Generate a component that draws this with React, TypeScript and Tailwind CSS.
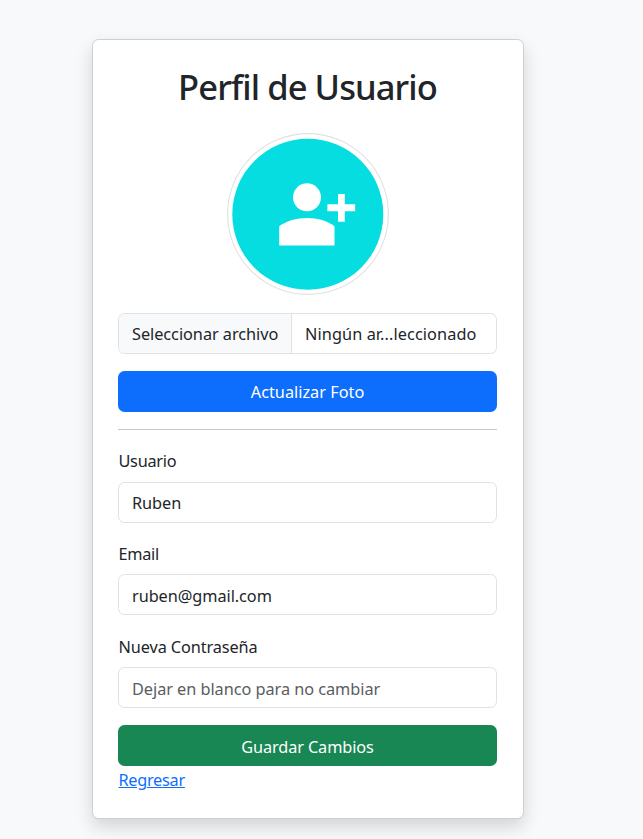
import type { ReactNode } from "react";

function Field({ label, value, placeholder, labelClass, inputClass, id }: {
  label: string;
  value?: string;
  placeholder?: string;
  labelClass: string;
  inputClass: string;
  id: string;
}) {
  return (
    <div className="flex flex-col">
      <label htmlFor={id} className={`mb-[7px] h-[27px] pl-[0.5px] leading-[27px] ${labelClass}`}>{label}</label>
      <input
        id={id}
        defaultValue={value}
        placeholder={placeholder}
        className={`h-[41px] w-full rounded-[6.5px] border border-[#dee2e6] bg-white px-[13px] outline-none placeholder:text-[#595c5f] placeholder:opacity-100 ${inputClass}`}
      />
    </div>
  );
}

function Button({ color, children }: { color: string; children: ReactNode }) {
  return (
    <button className={`flex h-[41px] w-full items-center justify-center rounded-[6.5px] pt-[2px] text-white ${color}`}>
      {children}
    </button>
  );
}

function Avatar() {
  return (
    <svg className="mx-auto block h-[162px] w-[162px]" viewBox="227 133 162 162" aria-label="Foto de perfil">
      <circle cx="308" cy="214" r="80.4" fill="#fff" stroke="#dee2e6" strokeWidth="1.1" />
      <circle cx="307.8" cy="214.3" r="75.5" fill="#06dde0" />
      <g fill="#fff">
        <circle cx="307" cy="197.3" r="14" />
        <path d="M279.2 245.4V226.2C287 220.8 296 218 307 218S327 220.8 334.5 226.2V245.4Z" />
        <path d="M338 194H344.8V204.3H355.2V211.2H344.8V221.8H338V211.2H327.4V204.3H338Z" />
      </g>
    </svg>
  );
}

export default function App() {
  return (
    <main className="h-[839px] w-full overflow-hidden bg-[#f8f9fa] pt-[39px] pl-[92px] font-['Noto_Sans','Open_Sans',sans-serif] text-[16.3px] text-[#212529]">
      <section className="flex h-[780px] w-[432px] flex-col rounded-[6.5px] border border-[#cdd0d2] bg-white pt-[26px] pr-[26px] pl-[25px] shadow-[0_8px_17px_rgba(0,0,0,0.15)]">
        <h1 className="h-[44px] text-center text-[34.5px] leading-[41px] font-medium tracking-[-0.9px] whitespace-nowrap">Perfil de Usuario</h1>
        <div className="mt-[23px] flex justify-center pl-px"><Avatar /></div>
        <div className="mt-[18px] flex h-[41px] shrink-0 overflow-hidden rounded-[6.5px] border border-[#dee2e6]">
          <span className="flex w-[173px] shrink-0 items-center border-r border-[#dee2e6] bg-[#f8f9fa] pt-[2px] pl-[13px] tracking-[-0.04px] whitespace-nowrap"><span>Seleccionar archivo</span></span>
          <span className="flex items-center pt-[2px] pl-[13px] tracking-[0.09px] whitespace-nowrap"><span>Ningún ar...leccionado</span></span>
        </div>
        <div className="mt-[17px]"><Button color="bg-[#0d6efd]"><span>Actualizar Foto</span></Button></div>
        <hr className="mt-[17px] border-[#c8c9ca]" />
        <form className="mt-[17.8px] flex flex-col gap-[17.5px]" onSubmit={(e) => e.preventDefault()}>
          <Field id="usuario" label="Usuario" value="Ruben" labelClass="tracking-[-0.28px]" inputClass="pt-[2px] tracking-[-0.05px]" />
          <Field id="email" label="Email" value="ruben@gmail.com" labelClass="pt-px tracking-[-0.3px]" inputClass="pt-[2px] tracking-[-0.06px]" />
          <Field id="clave" label="Nueva Contraseña" placeholder="Dejar en blanco para no cambiar" labelClass="pt-px tracking-[-0.1px]" inputClass="pt-[3px] tracking-[-0.04px]" />
          <Button color="bg-[#198754]"><span className="tracking-[-0.12px]">Guardar Cambios</span></Button>
        </form>
        <a href="#" className="mt-px self-start pl-[0.5px] leading-[26px] tracking-[-0.28px] text-[#0d6efd] underline">Regresar</a>
      </section>
    </main>
  );
}
